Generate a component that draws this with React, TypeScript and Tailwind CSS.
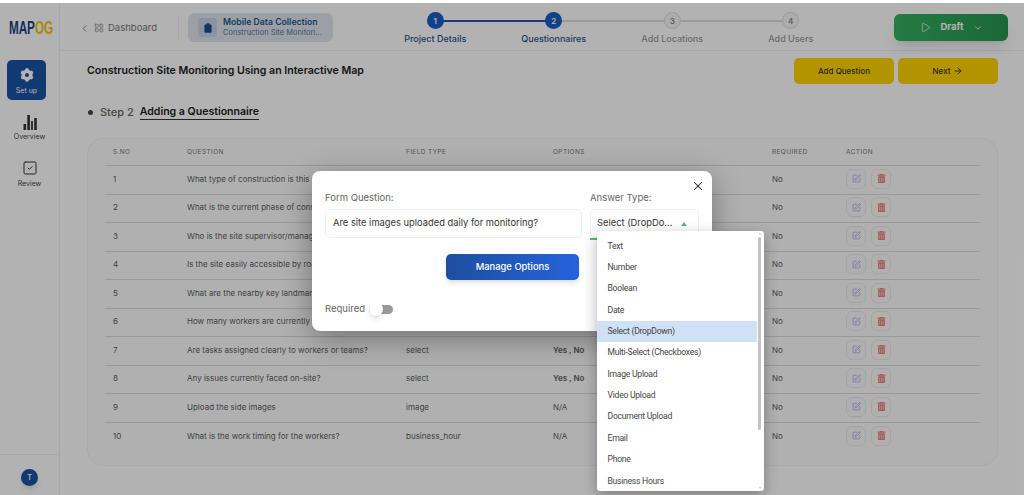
import { ArrowRight, ChevronDown, ChevronLeft, LayoutGrid, Play, SquareCheck, SquarePen, X } from "lucide-react";
import { FaTrashAlt } from "react-icons/fa";
import { RiSettings3Fill } from "react-icons/ri";

const rows = [
  { q: "What type of construction is this project?", type: "select", opts: "Yes , No" },
  { q: "What is the current phase of construction?", type: "select", opts: "Yes , No" },
  { q: "Who is the site supervisor/manager?", type: "text", opts: "N/A" },
  { q: "Is the site easily accessible by road?", type: "boolean", opts: "N/A" },
  { q: "What are the nearby key landmarks?", type: "text", opts: "N/A" },
  { q: "How many workers are currently on-site?", type: "number", opts: "N/A" },
  { q: "Are tasks assigned clearly to workers or teams?", type: "select", opts: "Yes , No" },
  { q: "Any issues currently faced on-site?", type: "select", opts: "Yes , No" },
  { q: "Upload the side images", type: "image", opts: "N/A" },
  { q: "What is the work timing for the workers?", type: "business_hour", opts: "N/A" },
];

const answerTypes = [
  "Text",
  "Number",
  "Boolean",
  "Date",
  "Select (DropDown)",
  "Multi-Select (Checkboxes)",
  "Image Upload",
  "Video Upload",
  "Document Upload",
  "Email",
  "Phone",
  "Business Hours",
];

const steps = [
  { n: 1, label: "Project Details", done: true },
  { n: 2, label: "Questionnaires", done: true },
  { n: 3, label: "Add Locations", done: false },
  { n: 4, label: "Add Users", done: false },
];

const colClass = "grid grid-cols-[74px_219px_147px_219px_74px_1fr] items-center px-[8px]";

const Stepper = () => (
  <div className="ml-[43px] mt-[3px] flex w-[474px] shrink-0">
    {steps.map((s, i) => (
      <div key={s.n} className="relative flex w-[118.5px] flex-col items-center">
        {i < 3 && (
          <div
            className={`absolute left-[59px] top-[8px] h-[1.5px] w-[118.5px] ${
              s.n === 1 ? "bg-[#1f55b5]" : "bg-[#dddddd]"
            }`}
          />
        )}
        <div
          className={`relative flex h-[17px] w-[17px] items-center justify-center rounded-full text-[8px] font-semibold ${
            s.done ? "bg-[#1c5cc4] text-white" : "border border-[#dddddd] bg-[#f7f7f7] text-[#8a8a8a]"
          }`}
        >
          {s.n}
        </div>
        <div className={`mt-[3px] whitespace-nowrap text-[9px] font-medium ${s.done ? "text-[#27528f]" : "text-[#9a9a9a]"}`}>
          {s.label}
        </div>
      </div>
    ))}
  </div>
);

const Sidebar = () => (
  <aside className="flex w-[60px] shrink-0 flex-col border-r border-[#f0f0f0]">
    <div className="flex h-[48px] items-center justify-center pl-[2px] pt-[2px]">
      <div className="origin-center scale-x-[0.65] whitespace-nowrap text-[18px] font-bold text-[#1c3f85]" style={{ fontFamily: '"Liberation Sans", sans-serif' }}>
        MAP<span className="text-[#f3c200]">OG</span>
      </div>
    </div>
    <div className="ml-[7px] mt-[9px] flex h-[40px] w-[39px] flex-col items-center justify-center rounded-[5px] bg-[#1b53a4] pt-[3px] text-white">
      <RiSettings3Fill className="h-[16px] w-[16px]" />
      <span className="mt-[3px] text-[7px]">Set up</span>
    </div>
    <div className="mt-[14px] flex flex-col items-center text-[#333333]">
      <svg viewBox="0 0 16 16" className="h-[16px] w-[16px]" fill="currentColor">
        <rect x="1.5" y="10" width="2.6" height="6" />
        <rect x="5.3" y="1" width="2.6" height="15" />
        <rect x="9.1" y="7" width="1.8" height="9" />
        <rect x="12.2" y="4" width="2.6" height="12" />
      </svg>
      <span className="mt-[2px] text-[7px] text-[#444444]">Overview</span>
    </div>
    <div className="mt-[17px] flex flex-col items-center text-[#333333]">
      <SquareCheck className="h-[16px] w-[16px]" strokeWidth={1.5} />
      <span className="mt-[3px] text-[7px] text-[#444444]">Review</span>
    </div>
    <div className="mt-auto flex h-[41px] items-center justify-center border-t border-[#f0f0f0] pt-[4px]">
      <div className="flex h-[17px] w-[17px] items-center justify-center rounded-full bg-[#1b53a4] text-[8px] font-medium text-white shadow-md">
        T
      </div>
    </div>
  </aside>
);

const Header = () => (
  <header className="flex h-[48px] shrink-0 items-center border-b border-[#f0f0f0] pt-[2px]">
    <div className="ml-[19px] mt-[1px] flex w-[78px] shrink-0 items-center text-[#777777]">
      <ChevronLeft className="h-[11px] w-[11px]" strokeWidth={2} />
      <LayoutGrid className="ml-[4px] h-[10px] w-[10px]" strokeWidth={1.5} />
      <span className="ml-[4px] text-[9.5px]">Dashboard</span>
    </div>
    <div className="ml-[21px] h-[24px] w-px shrink-0 bg-[#ececec]" />
    <div className="ml-[9px] flex h-[29px] w-[145px] shrink-0 items-center rounded-[6px] bg-[#dfe6f0] pl-[10px]">
      <div className="flex h-[19px] w-[19px] items-center justify-center rounded-[4px] bg-[#c6d3e6]">
        <svg viewBox="0 0 10 12" className="h-[10px] w-[8px]" fill="#1a4a94">
          <rect x="0.5" y="1.5" width="9" height="10.5" rx="1.5" />
          <rect x="3" y="0" width="4" height="2.5" rx="0.8" />
        </svg>
      </div>
      <div className="ml-[6px] leading-none">
        <div className="whitespace-nowrap text-[8.7px] font-semibold text-[#27528f]">Mobile Data Collection</div>
        <div className="mt-[2px] whitespace-nowrap text-[7.5px] text-[#56759f]">Construction Site Monitori...</div>
      </div>
    </div>
    <Stepper />
    <button className="ml-[44px] flex h-[27px] w-[114px] shrink-0 items-center justify-center rounded-[6px] bg-gradient-to-r from-[#34b060] to-[#28964e] text-[9.5px] font-bold text-white shadow-lg">
      <Play className="h-[11px] w-[11px]" strokeWidth={1.5} />
      <span className="ml-[10px]">Draft</span>
      <ChevronDown className="ml-[9px] h-[10px] w-[10px]" strokeWidth={2} />
    </button>
  </header>
);

const Table = () => (
  <div className="mt-[15px] h-[328px] w-[911px] rounded-[16px] border border-[#f2f2f2] bg-[#fdfdfd] px-[17px]">
    <div className={`${colClass} h-[27px] border-b border-[#dcdcdc] pt-[2px] text-[6.5px] font-normal tracking-[0.06em] text-[#777777]`}>
      <span>S.NO</span>
      <span>QUESTION</span>
      <span>FIELD TYPE</span>
      <span>OPTIONS</span>
      <span>REQUIRED</span>
      <span>ACTION</span>
    </div>
    {rows.map((r, i) => (
      <div
        key={r.q}
        className={`${colClass} h-[28.5px] pb-[2px] text-[8px] text-[#5c5c5c] ${i < 9 ? "border-b border-[#dcdcdc]" : ""}`}
      >
        <span>{i + 1}</span>
        <span className="whitespace-nowrap">{r.q}</span>
        <span>{r.type}</span>
        <span className={r.opts === "N/A" ? "" : "font-semibold"}>{r.opts}</span>
        <span>No</span>
        <div className="flex gap-[5px]">
          <div className="flex h-[20px] w-[20px] items-center justify-center rounded-[6px] border border-[#e8e8f2] bg-[#fbfbff] text-[#9a96dc]">
            <SquarePen className="h-[9px] w-[9px]" strokeWidth={1.8} />
          </div>
          <div className="flex h-[20px] w-[20px] items-center justify-center rounded-[6px] border border-[#f2e8e8] bg-[#fffbfb] text-[#ea8080]">
            <FaTrashAlt className="h-[9px] w-[9px]" />
          </div>
        </div>
      </div>
    ))}
  </div>
);

const Dropdown = () => (
  <div className="absolute left-[597px] top-[231px] h-[260px] w-[167px] overflow-hidden rounded-[3px] bg-white shadow-[0_4px_14px_rgba(0,0,0,0.3)]">
    <div className="w-[160px] pt-[4.5px]" style={{ fontFamily: "Roboto, sans-serif" }}>
      {answerTypes.map((t) => (
        <div
          key={t}
          className={`flex h-[21.35px] items-center whitespace-nowrap pl-[10.5px] text-[8.6px] tracking-[-0.03em] text-[#444444] ${
            t === "Select (DropDown)" ? "bg-[#cfe0f7]" : ""
          }`}
        >
          {t}
        </div>
      ))}
    </div>
    <div className="absolute right-[3px] top-[2px] h-0 w-0 border-x-[1.5px] border-b-[2px] border-x-transparent border-b-[#c4c4c4]" />
    <div className="absolute right-[3px] top-[6px] h-[193px] w-[3px] rounded-full bg-[#c4c4c4]" />
    <div className="absolute bottom-[2px] right-[3px] h-0 w-0 border-x-[1.5px] border-t-[2px] border-x-transparent border-t-[#c4c4c4]" />
  </div>
);

const Modal = () => (
  <div className="absolute left-[312px] top-[171px] h-[160px] w-[400px] rounded-[8px] bg-white px-[13px] pt-[20px] text-[#666666] shadow-[0_8px_30px_rgba(0,0,0,0.35)]">
    <X className="absolute right-[7px] top-[8px] h-[14px] w-[14px] text-[#222222]" strokeWidth={1.8} />
    <div className="flex gap-[8px]">
      <div className="w-[257px]">
        <div className="text-[9.5px] leading-[14px]">Form Question:</div>
        <div className="mt-[4px] flex h-[29px] items-center rounded-[5px] border border-[#eeeeee] pl-[7px] text-[9.35px] text-[#333333]">
          Are site images uploaded daily for monitoring?
        </div>
      </div>
      <div className="w-[109px]">
        <div className="text-[9.5px] leading-[14px]">Answer Type:</div>
        <div className="mt-[4px] flex h-[29px] items-center rounded-[5px] border border-[#eeeeee] pl-[6px] text-[9.35px] text-[#333333]">
          Select (DropDo...
          <span className="ml-[9px] h-0 w-0 border-x-[3px] border-b-[4px] border-x-transparent border-b-[#4cc474]" />
        </div>
      </div>
    </div>
    <div className="ml-[121px] mt-[16px] flex h-[26px] w-[133px] items-center justify-center rounded-[5px] bg-gradient-to-r from-[#1d4f9e] to-[#2563dc] text-[9.4px] font-medium text-white shadow-md">
      Manage Options
    </div>
    <div className="mt-[22px] flex items-center">
      <span className="text-[9.5px]">Required</span>
      <div className="relative ml-[4px] h-[9px] w-[24px] rounded-full bg-[#9a9a9a]">
        <div className="absolute left-0 top-[-3px] h-[14px] w-[14px] rounded-full bg-white shadow-md" />
      </div>
    </div>
  </div>
);

export default function App() {
  return (
    <div className="relative h-[495px] w-[1024px] overflow-hidden bg-white" style={{ fontFamily: "Inter, sans-serif" }}>
      <div className="flex h-full pt-[3px]">
        <Sidebar />
        <div className="flex min-w-0 flex-1 flex-col">
          <Header />
          <main className="pl-[27px]">
            <div className="mt-[7px] flex h-[26px] items-center">
              <h1 className="w-[707px] text-[10.6px] font-semibold text-[#222222]">
                Construction Site Monitoring Using an Interactive Map
              </h1>
              <button className="h-[26px] w-[100px] rounded-[5px] bg-[#ffd500] text-[8px] font-medium text-[#333333]">
                Add Question
              </button>
              <button className="ml-[4px] flex h-[26px] w-[100px] items-center justify-center gap-[3px] rounded-[5px] bg-[#ffd500] text-[8px] font-medium text-[#333333]">
                Next <ArrowRight className="h-[10px] w-[10px]" strokeWidth={2.2} />
              </button>
            </div>
            <div className="mt-[18px] flex h-[20px] items-center">
              <span className="ml-[1px] h-[5px] w-[5px] rounded-full bg-[#444444]" />
              <span className="ml-[7px] text-[11px] font-medium text-[#666666]">Step 2</span>
              <span className="ml-[6px] border-b border-[#333333] text-[10.55px] font-semibold leading-[15px] text-[#222222]">
                Adding a Questionnaire
              </span>
            </div>
            <div className="pt-px">
              <Table />
            </div>
          </main>
        </div>
      </div>
      <div className="absolute inset-x-0 bottom-0 top-[3px] bg-black/30" />
      <Modal />
      <div className="absolute left-[590px] top-[238px] h-[1.5px] w-[10px] bg-[#4cc474]" />
      <Dropdown />
    </div>
  );
}
